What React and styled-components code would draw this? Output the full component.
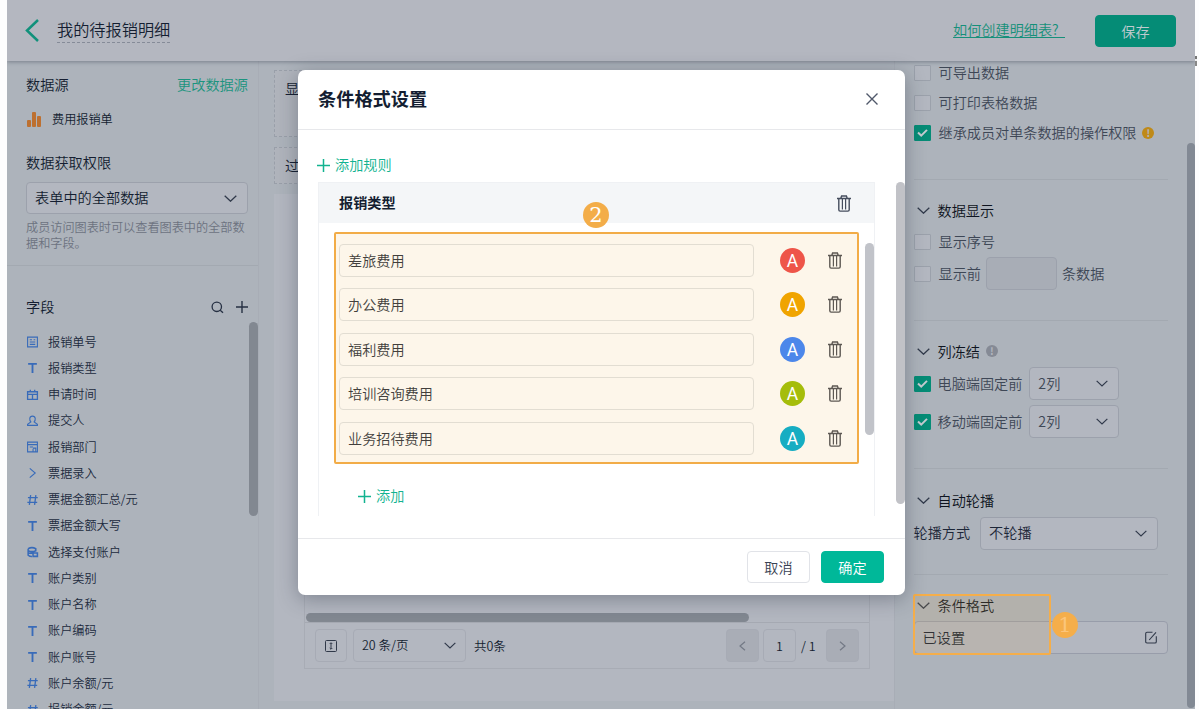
import React from 'react';
import styled, { createGlobalStyle } from 'styled-components';

const GlobalStyle = createGlobalStyle`
	* { box-sizing: border-box; }
	body {
		margin: 0;
		background: #fdfdfe;
		font-family: "Noto Sans CJK SC", sans-serif;
		font-size: 14.15px;
		font-weight: 350;
		color: #141e31;
		overflow: hidden;
	}
	svg { display: block; flex: none; }
`;

const Page = styled.div`
	position: relative;
	display: flex;
	width: 1199px;
	height: 710px;
	padding-left: 7px;
	overflow: hidden;
`;

const Frame = styled.div`
	display: flex;
	flex-direction: column;
	width: 1188px;
	height: 709px;
	overflow: hidden;
	background: #adb3bb;
`;

const Edge = styled.div`
	width: 4px;
	padding-top: 56px;
`;

const EdgeMark = styled.div`
	width: 2px;
	height: 10px;
	border-top: 3px solid #777;
	border-bottom: 5px solid #888;
	background: #eee;
`;

const Header = styled.header`
	position: relative;
	display: flex;
	align-items: center;
	flex: none;
	height: 61px;
	padding: 0 19px 0 18px;
	background: #b4b7c0;
	box-shadow: 0 1px 4px rgba(40, 48, 66, 0.4);
`;

const PageTitle = styled.div`
	margin-left: 17px;
	height: 25px;
	line-height: 22px;
	font-size: 16.2px;
	border-bottom: 1px dashed #858b98;
`;

const HelpLink = styled.a`
	margin: -3px 30px 0 auto;
	color: #16907a;
	text-decoration: underline;
	text-underline-offset: 2px;
	white-space: pre;
`;

const Button = styled.button`
	width: ${props => props.$width || 63}px;
	height: 32px;
	padding: 0;
	border: 1px solid ${props => props.$border || props.$bg};
	border-radius: 4px;
	background: ${props => props.$bg};
	color: ${props => props.$color};
	font: inherit;
	line-height: 28px;
`;

const Label = styled.span`
	margin-top: -2px;
`;

const Main = styled.div`
	display: flex;
	flex: 1;
	min-height: 0;
`;

const Sidebar = styled.aside`
	display: flex;
	flex-direction: column;
	flex: none;
	width: 252px;
	border-right: 1px solid #a8adb6;
`;

const SideRow = styled.div`
	display: flex;
	align-items: center;
	flex: none;
	height: ${props => props.$height}px;
	margin-top: ${props => props.$top || 0}px;
	padding: 0 10px 0 19px;
	font-size: ${props => props.$size || 14.2}px;
`;

const SourceLink = styled(Label)`
	margin-left: auto;
	color: #1b947e;
`;

const SourceName = styled(Label)`
	margin-left: 10px;
`;

const Select = styled.div`
	display: flex;
	align-items: center;
	justify-content: space-between;
	flex: none;
	width: ${props => props.$width}px;
	height: ${props => props.$height || 32}px;
	margin-top: ${props => props.$top || 0}px;
	padding: 0 10px 0 8px;
	border: 1px solid ${props => props.$line || '#9ca1ac'};
	border-radius: 4px;
	background: #b3b7c0;
	font-size: 14.2px;
`;

const Hint = styled.div`
	width: 224px;
	margin: 5px 0 1px 19px;
	font-size: 12.15px;
	line-height: 16px;
	color: #6c727f;
`;

const Rule = styled.div`
	flex: none;
	height: 1px;
	margin-top: ${props => props.$top}px;
	background: #a3a9b1;
`;

const FieldTools = styled.div`
	display: flex;
	align-items: center;
	gap: 12px;
	margin-left: auto;
`;

const FieldArea = styled.div`
	display: flex;
	justify-content: space-between;
	flex: 1;
	min-height: 0;
	margin-top: 5px;
	overflow: hidden;
`;

const FieldList = styled.ul`
	margin: 0;
	padding: 7px 0 0 19px;
	list-style: none;
`;

const FieldItem = styled.li`
	display: flex;
	align-items: center;
	gap: 9px;
	height: 26.25px;
	font-size: 12.15px;
	color: #202a3d;
	white-space: nowrap;
`;

const Thumb = styled.div`
	flex: none;
	width: ${props => props.$width || 9}px;
	height: ${props => props.$height}px;
	margin-top: ${props => props.$top || 0}px;
	margin-left: ${props => props.$left || 0};
	border-radius: 5px;
	background: ${props => props.$color || '#828891'};
`;

const Canvas = styled.main`
	display: flex;
	flex-direction: column;
	flex: none;
	width: 635px;
	padding: 9px 0 0 15px;
`;

const DropZone = styled.div`
	flex: none;
	height: ${props => props.$height}px;
	margin-bottom: 10px;
	padding: 7px 10px;
	border: 1px dashed #999fa9;
	background: #b0b4bc;
	line-height: 20px;
`;

const Sheet = styled.div`
	height: 507px;
	padding: 0 24px 0 30px;
	background: #b3b7c0;
`;

const Table = styled.div`
	display: flex;
	flex-direction: column;
	justify-content: flex-end;
	height: 475px;
	border: 1px solid #a8acb5;
`;

const Pager = styled.div`
	display: flex;
	align-items: center;
	height: 46px;
	padding: 0 10px;
	border-top: 1px solid #a5a9b2;
	font-size: 12.5px;
`;

const PagerBox = styled.div`
	display: flex;
	align-items: center;
	justify-content: ${props => (props.$width > 40 ? 'space-between' : 'center')};
	flex: none;
	width: ${props => props.$width || 33}px;
	height: 33px;
	margin-left: ${props => props.$left || 0}px;
	padding: 0 ${props => (props.$width > 40 ? 9 : 0)}px 0 ${props => (props.$width > 40 ? 8 : 0)}px;
	border: 1px solid #a7abb5;
	border-radius: 4px;
	background: ${props => (props.$disabled ? '#a9adb6' : 'transparent')};
`;

const PagerTotal = styled.span`
	margin-left: 8px;
`;

const PagerRight = styled.div`
	display: flex;
	align-items: center;
	margin-left: auto;
`;

const PagerCount = styled.span`
	width: 30px;
	padding-left: 5px;
`;

const Panel = styled.aside`
	display: flex;
	flex: 1;
	border-left: 1px solid #a8adb6;
`;

const PanelBody = styled.div`
	flex: none;
	width: 273px;
	padding-left: 18.5px;
`;

const Option = styled.div`
	display: flex;
	align-items: center;
	height: ${props => props.$height || 30}px;
	margin-top: ${props => props.$top || 0}px;
	gap: ${props => props.$gap || 8}px;
	color: ${props => props.$color || '#3e4756'};
	white-space: nowrap;
`;

const Box = styled.span`
	display: flex;
	align-items: center;
	justify-content: center;
	flex: none;
	width: 17px;
	height: 16px;
	border-radius: 1px;
	border: 1px solid ${props => (props.$on ? '#058c76' : '#9ba1ab')};
	background: ${props => (props.$on ? '#058c76' : '#b3b7c0')};
`;

const Section = styled.div`
	display: flex;
	align-items: center;
	height: 24px;
	margin-top: ${props => props.$top}px;
	padding: 0 0 2px 3px;
	gap: 8px;
	color: #0e1420;
`;

const Info = styled.span`
	display: flex;
	align-items: center;
	justify-content: center;
	width: 12px;
	height: 12px;
	margin-left: -2px;
	border-radius: 50%;
	background: ${props => props.$bg};
	color: #b3b7c0;
	font-size: 10px;
	font-weight: 700;
	line-height: 12px;
`;

const NumberInput = styled.span`
	width: 71px;
	height: 33px;
	margin: 0 -3px;
	border: 1px solid #9ca1ac;
	border-radius: 4px;
	background: #a8adb6;
`;

const FormatMarker = styled.div`
	position: absolute;
	left: 913px;
	top: 594px;
	width: 138px;
	height: 61px;
	border: 2px solid #f5ae4a;
	border-radius: 2px;
	background: rgba(215, 165, 90, 0.15);
`;

const Badge = styled.div`
	position: absolute;
	left: ${props => props.$left}px;
	top: ${props => props.$top}px;
	width: 26px;
	height: 26px;
	border-radius: 50%;
	background: ${props => props.$bg};
	color: ${props => props.$color};
	font: 21px/26px "DejaVu Serif", serif;
	text-align: center;
`;

const Dialog = styled.section`
	position: absolute;
	left: 298px;
	top: 70px;
	display: flex;
	flex-direction: column;
	width: 607px;
	height: 525px;
	border-radius: 7px;
	background: #fff;
	box-shadow: 0 4px 20px rgba(30, 38, 55, 0.35);
`;

const DialogHead = styled.div`
	display: flex;
	align-items: center;
	justify-content: space-between;
	height: 60px;
	padding: 0 27px 1px 20px;
	border-bottom: 1px solid #e7e8eb;
	font-size: 18.2px;
	font-weight: 700;
`;

const DialogBody = styled.div`
	display: flex;
	flex-direction: column;
	height: 408px;
	padding-left: 20px;
`;

const AddLink = styled.div`
	display: flex;
	align-items: center;
	gap: 5px;
	height: 24px;
	margin: ${props => props.$margin};
	color: #12b390;
`;

const Scroller = styled.div`
	display: flex;
	justify-content: space-between;
	height: 334px;
	margin-top: 5px;
`;

const Card = styled.div`
	width: 557px;
	border: 1px solid #eff1f4;
	border-bottom: none;
`;

const CardHead = styled.div`
	display: flex;
	align-items: center;
	justify-content: space-between;
	height: 40px;
	padding: 0 23px 0 20px;
	background: #f4f6f8;
	font-weight: 700;
`;

const CardBody = styled.div`
	display: flex;
	padding: 9px 0 0 15px;
`;

const RuleList = styled.div`
	display: flex;
	flex-direction: column;
	width: 525px;
	height: 232px;
	padding: 10px 0 0 3px;
	border: 2px solid #f2ac47;
	border-radius: 2px;
	background: #fdf6ea;
`;

const RuleRow = styled.div`
	display: flex;
	align-items: center;
	flex: none;
	height: 44.4px;
	padding-bottom: 11.4px;
`;

const RuleInput = styled.div`
	width: 415px;
	height: 33px;
	padding-left: 8px;
	border: 1px solid #e2ddd2;
	border-radius: 4px;
	line-height: 31px;
	color: #423f3c;
`;

const Swatch = styled.span`
	width: 25px;
	height: 25px;
	margin: 0 23px 0 26px;
	border-radius: 50%;
	background: ${props => props.$bg};
	color: #fff;
	font: 17.5px/26px Roboto, sans-serif;
	text-align: center;
`;

const DialogFoot = styled.div`
	display: flex;
	align-items: center;
	justify-content: flex-end;
	flex: 1;
	gap: 11px;
	padding-right: 21px;
	border-top: 1px solid #e7e8eb;
`;

const Chevron = ({ w = 13, h = 7, color = '#30394a', sw = 1.3 }) => (
	<svg width={w} height={h} viewBox="0 0 13 7" fill="none" stroke={color} strokeWidth={sw}>
		<path d="M.7.7 6.5 6.2 12.3.7" />
	</svg>
);

const Arrow = ({ flip }) => (
	<svg width="7" height="10" viewBox="0 0 7 10" fill="none" stroke="#737985" strokeWidth="1.2">
		<path d={flip ? 'M1 .7 6 5 1 9.3' : 'M6 .7 1 5l5 4.3'} />
	</svg>
);

const Plus = ({ size = 13, color = '#12b390', sw = 1.5 }) => (
	<svg width={size} height={size} viewBox="0 0 13 13" stroke={color} strokeWidth={sw}>
		<path d="M6.5 0v13M0 6.5h13" />
	</svg>
);

const Trash = ({ color = '#5d5853' }) => (
	<svg width="14" height="17" viewBox="0 0 14 17" fill="none" stroke={color} strokeWidth="1.4">
		<path d="M0 3.5h14M3.8 3.3 4.6 1h4.8l.8 2.3M1.8 3.5v11.3q0 1.3 1.3 1.3h7.8q1.3 0 1.3-1.3V3.5" />
		<path d="M5.4 3.8v10.6M8.6 3.8v10.6" strokeWidth="1.2" />
	</svg>
);

const Tick = () => (
	<svg width="11" height="8" viewBox="0 0 11 8" fill="none" stroke="#c5cbd1" strokeWidth="2">
		<path d="M1 3.6 4.2 6.6 10 .9" />
	</svg>
);

const glyphs = {
	serial: <path d="M1 1h9v9H1zM3 3.5h2M6.5 3.5H8M3 5.5h5M3 7.7h5" />,
	text: <path d="M1.5 1.7h8M5.5 1.7V10" strokeWidth="1.7" />,
	date: <path d="M1 2.5h9v7H1zM1 5h9M3.5.7v2M7.5.7v2M5.5 5v4.5" strokeWidth="1.2" />,
	user: <path d="M4 6.3Q2.8 5 3 3.2 3.3 1 5.5 1T8 3.2Q8.2 5 7 6.3L10 8.5v1H1v-1z" />,
	dept: <path d="M1 1h9v9H1zM1 3.3h9M3 5.5h3M6 6.5h2.5V10M6 7v3" />,
	sub: <path d="M3 1.2 8 5.5 3 9.8" />,
	number: <path d="M3.8 1 2.6 10M8.6 1 7.4 10M1.3 3.4h9M.8 7.6h9" strokeWidth="1.2" />,
	link: <path d="M1.5 2.5Q5 .5 8.5 2.5V5M1.5 2.5v6Q3 9.8 5 9.7M1.5 4.3Q5 6 8.5 4.3M1.5 6.6h4M6 6.5h4v3H6z" strokeWidth="1.4" />,
};

const FieldIcon = ({ type }) => (
	<svg width="13" height="12" viewBox="0 0 11 11" fill="none" stroke="#386bb9" strokeWidth="1">
		{glyphs[type]}
	</svg>
);

const fields = [
	['serial', '报销单号'],
	['text', '报销类型'],
	['date', '申请时间'],
	['user', '提交人'],
	['dept', '报销部门'],
	['sub', '票据录入'],
	['number', '票据金额汇总/元'],
	['text', '票据金额大写'],
	['link', '选择支付账户'],
	['text', '账户类别'],
	['text', '账户名称'],
	['text', '账户编码'],
	['text', '账户账号'],
	['number', '账户余额/元'],
	['number', '报销金额/元'],
];

const rules = [
	['差旅费用', '#ee5549'],
	['办公费用', '#f0a400'],
	['福利费用', '#4c87ea'],
	['培训咨询费用', '#a5bd0b'],
	['业务招待费用', '#16adc2'],
];

const FieldSidebar = () => (
	<Sidebar>
		<SideRow $height={48}><Label>数据源</Label><SourceLink>更改数据源</SourceLink></SideRow>
		<SideRow $height={20} $size={12.15}>
			<svg width="16" height="15" viewBox="0 0 16 15" fill="#bd7030">
				<rect x="1" y="8" width="4" height="7" rx="1" />
				<rect x="6" y="0" width="4" height="15" rx="1" />
				<rect x="11" y="4" width="4" height="11" rx="1" />
			</svg>
			<SourceName>费用报销单</SourceName>
		</SideRow>
		<SideRow $height={24} $top={22}><Label>数据获取权限</Label></SideRow>
		<SideRow $height={32} $top={7}>
			<Select $width={222}><Label>表单中的全部数据</Label><Chevron /></Select>
		</SideRow>
		<Hint>成员访问图表时可以查看图表中的全部数据和字段。</Hint>
		<Rule $top={13} />
		<SideRow $height={20} $top={31}>
			<Label>字段</Label>
			<FieldTools>
				<svg width="13" height="13" viewBox="0 0 13 13" fill="none" stroke="#263043" strokeWidth="1.3">
					<circle cx="5.8" cy="5.8" r="4.7" />
					<path d="m9.2 9.2 2.8 2.6" />
				</svg>
				<Plus size={12} color="#263043" />
			</FieldTools>
		</SideRow>
		<FieldArea>
			<FieldList>
				{fields.map(([type, name]) => (
					<FieldItem key={name}><FieldIcon type={type} /><Label>{name}</Label></FieldItem>
				))}
			</FieldList>
			<Thumb $height={194} />
		</FieldArea>
	</Sidebar>
);

const ReportCanvas = () => (
	<Canvas>
		<DropZone $height={67}>显</DropZone>
		<DropZone $height={37}>过</DropZone>
		<Sheet>
			<Table>
				<Thumb $width={443} $height={9} $left="1px" />
				<Pager>
					<PagerBox $width={32}>
						<svg width="12" height="12" viewBox="0 0 12 12" fill="none" stroke="#303949" strokeWidth="1">
							<rect x=".5" y=".5" width="11" height="11" rx="1" />
							<path d="M6 3v6M4.7 4 6 2.7 7.3 4M4.7 8 6 9.3 7.3 8" />
						</svg>
					</PagerBox>
					<PagerBox $width={113} $left={6}><Label>20 条/页</Label><Chevron w={12} /></PagerBox>
					<PagerTotal>共0条</PagerTotal>
					<PagerRight>
						<PagerBox $disabled><Arrow /></PagerBox>
						<PagerBox $left={4}>1</PagerBox>
						<PagerCount>/ 1</PagerCount>
						<PagerBox $disabled><Arrow flip /></PagerBox>
					</PagerRight>
				</Pager>
			</Table>
		</Sheet>
	</Canvas>
);

const SettingsPanel = () => (
	<Panel>
		<PanelBody>
			<Option $height={30} $top={-3}><Box /><Label>可导出数据</Label></Option>
			<Option><Box /><Label>可打印表格数据</Label></Option>
			<Option>
				<Box $on><Tick /></Box><Label>继承成员对单条数据的操作权限</Label><Info $bg="#bf8a18">!</Info>
			</Option>
			<Rule $top={31} />
			<Section $top={19}><Chevron />数据显示</Section>
			<Option $top={4}><Box /><Label>显示序号</Label></Option>
			<Option $height={33}><Box /><Label>显示前</Label><NumberInput /><Label>条数据</Label></Option>
			<Rule $top={30} />
			<Section $top={19}><Chevron />列冻结<Info $bg="#858a95">!</Info></Section>
			<Option $height={33} $top={3} $gap={7}>
				<Box $on><Tick /></Box><Label>电脑端固定前</Label>
				<Select $width={90} $height={33}><Label>2列</Label><Chevron w={12} /></Select>
			</Option>
			<Option $height={33} $top={5} $gap={7}>
				<Box $on><Tick /></Box><Label>移动端固定前</Label>
				<Select $width={90} $height={33}><Label>2列</Label><Chevron w={12} /></Select>
			</Option>
			<Rule $top={30} />
			<Section $top={20}><Chevron />自动轮播</Section>
			<Option $height={32} $top={4} $gap={10} $color="#1c2638">
				<Label>轮播方式</Label>
				<Select $width={178} $height={33}><Label>不轮播</Label><Chevron w={12} /></Select>
			</Option>
			<Rule $top={25} />
			<Section $top={19}><Chevron />条件格式</Section>
			<Select $width={254} $height={33} $top={3} $line="#989daa">
				<Label>已设置</Label>
				<svg width="12" height="13" viewBox="0 0 12 13" fill="none" stroke="#303949" strokeWidth="1.1">
					<path d="M7.5 1.2H2q-1.3 0-1.3 1.3v8.2Q.7 12 2 12h8q1.3 0 1.3-1.3V5.2M4.2 9 11 1.4" />
				</svg>
			</Select>
		</PanelBody>
		<Thumb $width={8} $height={565} $top={82} $left="auto" $color="#828994" />
	</Panel>
);

const FormatDialog = () => (
	<Dialog>
		<DialogHead>
			<Label>条件格式设置</Label>
			<svg width="12" height="12" viewBox="0 0 12 12" stroke="#50586a" strokeWidth="1.4">
				<path d="m.5.5 11 11m0-11-11 11" />
			</svg>
		</DialogHead>
		<DialogBody>
			<AddLink $margin="23px 0 0 -1px"><Plus /><Label>添加规则</Label></AddLink>
			<Scroller>
				<Card>
					<CardHead><Label>报销类型</Label><Trash color="#454d5d" /></CardHead>
					<CardBody>
						<RuleList>
							{rules.map(([name, color]) => (
								<RuleRow key={name}>
									<RuleInput>{name}</RuleInput>
									<Swatch $bg={color}>A</Swatch>
									<Trash />
								</RuleRow>
							))}
						</RuleList>
						<Thumb $height={192} $top={11} $left="auto" $color="#c1c3c9" />
					</CardBody>
					<AddLink $margin="20px 0 0 39px"><Plus /><Label>添加</Label></AddLink>
				</Card>
				<Thumb $height={322} $color="#c1c2c7" />
			</Scroller>
		</DialogBody>
		<DialogFoot>
			<Button $bg="#fff" $border="#e1e3e8" $color="#394253">取消</Button>
			<Button $bg="#00b899" $color="#fff">确定</Button>
		</DialogFoot>
		<Badge $left={285} $top={132} $bg="#f3ad49" $color="#fff">2</Badge>
	</Dialog>
);

const App = () => (
	<Page>
		<GlobalStyle />
		<Frame>
			<Header>
				<svg width="15" height="23" viewBox="0 0 15 23" fill="none" stroke="#11917b" strokeWidth="2.5">
					<path d="M13 1 2 11.5 13 22" />
				</svg>
				<PageTitle>我的待报销明细</PageTitle>
				<HelpLink>{'如何创建明细表?  '}</HelpLink>
				<Button $width={81} $bg="#058c76" $color="#c0cbd0">保存</Button>
			</Header>
			<Main>
				<FieldSidebar />
				<ReportCanvas />
				<SettingsPanel />
			</Main>
		</Frame>
		<Edge><EdgeMark /></Edge>
		<FormatMarker />
		<Badge $left={1052} $top={612} $bg="#f5ae4a" $color="#fbc57b">1</Badge>
		<FormatDialog />
	</Page>
);

export default App;
